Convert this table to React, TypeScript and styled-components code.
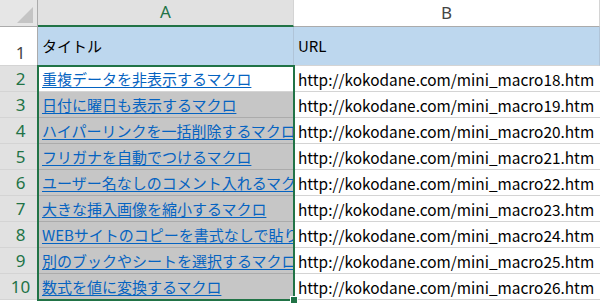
import styled, { createGlobalStyle } from 'styled-components'

const rows = [
  { title: '重複データを非表示するマクロ', url: 'http://kokodane.com/mini_macro18.htm' },
  { title: '日付に曜日も表示するマクロ', url: 'http://kokodane.com/mini_macro19.htm' },
  { title: 'ハイパーリンクを一括削除するマクロ', url: 'http://kokodane.com/mini_macro20.htm' },
  { title: 'フリガナを自動でつけるマクロ', url: 'http://kokodane.com/mini_macro21.htm' },
  { title: 'ユーザー名なしのコメント入れるマクロ', url: 'http://kokodane.com/mini_macro22.htm' },
  { title: '大きな挿入画像を縮小するマクロ', url: 'http://kokodane.com/mini_macro23.htm' },
  { title: 'WEBサイトのコピーを書式なしで貼り付けるマクロ', url: 'http://kokodane.com/mini_macro24.htm' },
  { title: '別のブックやシートを選択するマクロ', url: 'http://kokodane.com/mini_macro25.htm' },
  { title: '数式を値に変換するマクロ', url: 'http://kokodane.com/mini_macro26.htm' },
]

const GlobalStyle = createGlobalStyle`
  html, body {
    margin: 0;
    background: #fff;
    overflow: hidden;
  }
  body {
    font-family: 'Noto Sans CJK JP', 'Noto Sans', sans-serif;
  }
`

export default function App() {
  return (
    <>
      <GlobalStyle />
      <Sheet>
        <Corner>
          <svg width="38" height="27">
            <polygon points="33,7 33,23 17,23" fill="#c4c4c4" />
          </svg>
        </Corner>
        <ColHeader selected>A</ColHeader>
        <ColHeader>B</ColHeader>

        <RowHeader>1</RowHeader>
        <HeadCell>タイトル</HeadCell>
        <HeadCell>URL</HeadCell>

        {rows.map((row, i) => (
          <Row key={row.url}>
            <RowHeader selected>{i + 2}</RowHeader>
            <TitleCell active={i === 0}>
              <Link>{row.title}</Link>
            </TitleCell>
            <UrlCell>{row.url}</UrlCell>
          </Row>
        ))}

        <Selection>
          <FillHandle />
        </Selection>
      </Sheet>
    </>
  )
}

const Sheet = styled.div`
  position: relative;
  display: grid;
  grid-template-columns: 38px 256px 1fr;
  grid-template-rows: 27px 39px repeat(9, 26px);
  width: 600px;
  height: 303px;
  overflow: hidden;
  font-size: 15px;
  color: #000;
`

const Row = styled.div`
  display: contents;
`

const Corner = styled.div`
  background: #e6e6e6;
  border-right: 1px solid #ababab;
  border-bottom: 1px solid #ababab;
  box-sizing: border-box;
  display: flex;
`

const ColHeader = styled.div<{ selected?: boolean }>`
  display: flex;
  align-items: center;
  justify-content: center;
  box-sizing: border-box;
  font-family: 'Noto Sans', sans-serif;
  font-size: 17px;
  padding-bottom: 2px;
  background: ${({ selected }) => (selected ? '#e1e1e1' : '#fff')};
  color: ${({ selected }) => (selected ? '#217346' : '#444')};
  border-right: 1px solid #d4d4d4;
  border-bottom: ${({ selected }) => (selected ? '2px solid #217346' : '1px solid #ababab')};
`

const RowHeader = styled.div<{ selected?: boolean }>`
  display: flex;
  align-items: flex-end;
  justify-content: center;
  box-sizing: border-box;
  padding-bottom: 1px;
  padding-left: 4px;
  font-family: 'Noto Sans', sans-serif;
  font-size: 17px;
  background: ${({ selected }) => (selected ? '#e1e1e1' : '#fff')};
  color: ${({ selected }) => (selected ? '#217346' : '#444')};
  border-right: 1px solid #ababab;
  border-bottom: 1px solid #d4d4d4;
`

const HeadCell = styled.div`
  display: flex;
  align-items: center;
  box-sizing: border-box;
  padding: 0 0 1px 4px;
  background: #bdd7ee;
  border-right: 1px solid #b0c4d8;
  border-bottom: 1px solid #d4d4d4;
  white-space: nowrap;
`

const TitleCell = styled.div<{ active?: boolean }>`
  display: flex;
  align-items: center;
  box-sizing: border-box;
  padding-left: 4px;
  overflow: hidden;
  white-space: nowrap;
  background: ${({ active }) => (active ? '#fff' : '#c6c6c6')};
  border-bottom: 1px solid ${({ active }) => (active ? '#d4d4d4' : '#ababab')};
`

const Link = styled.span`
  color: #0563c1;
  text-decoration: underline;
  text-underline-offset: 2px;
`

const UrlCell = styled.div`
  display: flex;
  align-items: center;
  box-sizing: border-box;
  padding-left: 4px;
  font-size: 15.4px;
  white-space: nowrap;
  overflow: hidden;
  border-bottom: 1px solid #d4d4d4;
`

const Selection = styled.div`
  position: absolute;
  left: 37px;
  top: 65px;
  width: 258px;
  height: 236px;
  box-sizing: border-box;
  border: 2px solid #217346;
  pointer-events: none;
`

const FillHandle = styled.div`
  position: absolute;
  right: -5px;
  bottom: -5px;
  width: 6px;
  height: 6px;
  background: #217346;
  border: 1px solid #fff;
`
